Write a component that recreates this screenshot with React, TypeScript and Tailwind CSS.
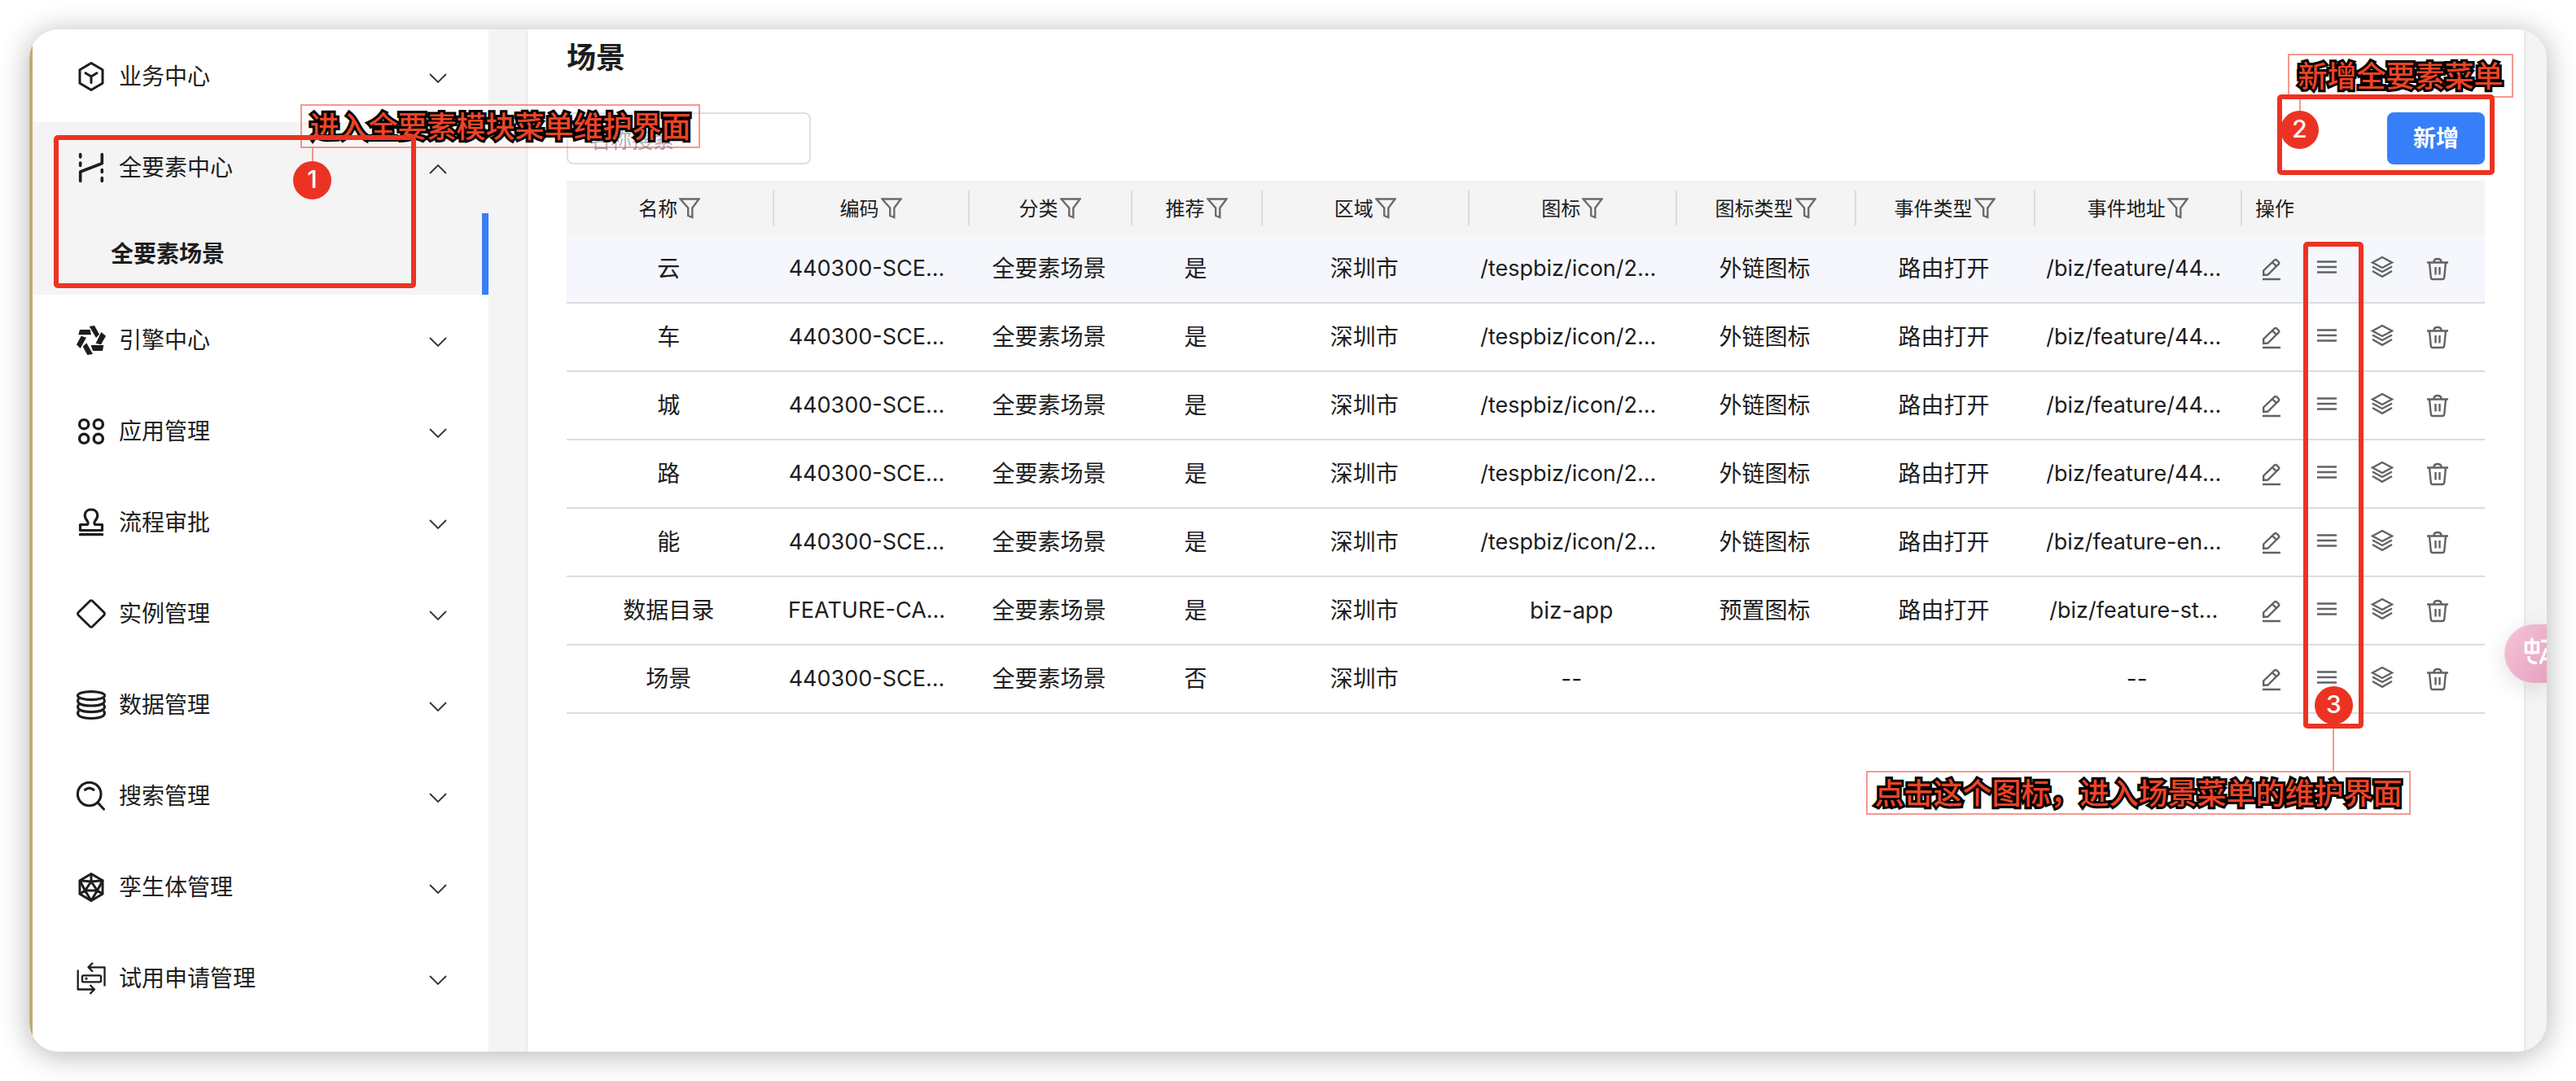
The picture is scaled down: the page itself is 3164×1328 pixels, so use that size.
import React from "react";

const MENU_ICONS: Record<string, React.ReactNode> = {
  business: (
    <g fill="none" stroke="currentColor" strokeWidth="3" strokeLinejoin="round" strokeLinecap="round">
      <path d="M18 1.5L32 9.7V26.3L18 34.5L4 26.3V9.7Z" />
      <path d="M11 13.8L18 18L25 13.8M18 18V25.5" />
    </g>
  ),
  feature: (
    <path
      d="M4.7 1.5V5M4.7 12V15.5M4.7 34.5V23L31.3 12.7V1.5M31.3 20.5V23.5M31.3 30.5V34.5"
      fill="none"
      stroke="currentColor"
      strokeWidth="3.6"
      strokeLinejoin="round"
      strokeLinecap="round"
    />
  ),
  engine: (
    <g fill="currentColor">
      <path d="M4 5H16.7L18 11.3H2.3Z" />
      <path d="M15.7 1L22 0L28 10.8L24 15Z" />
      <path d="M30.3 8L36 12.7L30 23.3L23.7 21.7Z" />
      <path d="M17.7 24H33.3L32 31H20Z" />
      <path d="M12.3 21.3L20 35L13.3 36L7.7 25.7Z" />
      <path d="M5.7 12.7L12 14.7L4.7 28L0 23.3Z" />
    </g>
  ),
  apps: (
    <g fill="none" stroke="currentColor" strokeWidth="3.4">
      <circle cx="9.2" cy="9.2" r="5.6" />
      <circle cx="26.8" cy="9.2" r="5.6" />
      <circle cx="9.2" cy="26.8" r="5.6" />
      <circle cx="26.8" cy="26.8" r="5.6" />
    </g>
  ),
  approval: (
    <g fill="none" stroke="currentColor" strokeWidth="3.2" strokeLinejoin="round" strokeLinecap="round">
      <path d="M4.5 27.5V20.5H13C14.6 20 14.4 17.5 13 15.6C7.8 9.5 10.5 2 18 2S28.2 9.5 23 15.6C21.6 17.5 21.4 20 23 20.5H31.5V27.5Z" />
      <path d="M4.3 32.7H31.7" />
    </g>
  ),
  instance: (
    <path
      d="M16.3 2.4Q18 0.8 19.7 2.4L33.7 16.3Q35.2 18 33.7 19.7L19.7 33.6Q18 35.2 16.3 33.6L2.3 19.7Q0.8 18 2.3 16.3Z"
      fill="none"
      stroke="currentColor"
      strokeWidth="2.8"
    />
  ),
  data: (
    <g fill="none" stroke="currentColor" strokeWidth="3.1">
      <ellipse cx="18" cy="6.6" rx="16.6" ry="5" />
      <path d="M2.8 9.8C-1 15 4 19 18 19S37 15 33.2 9.8" />
      <path d="M2.8 17.3C-1 22.5 4 26.6 18 26.6S37 22.5 33.2 17.3" />
      <path d="M2.8 25C-1 30.5 4 34.5 18 34.5S37 30.5 33.2 25" />
    </g>
  ),
  search: (
    <g fill="none" stroke="currentColor" strokeWidth="3.1" strokeLinecap="round">
      <circle cx="15.7" cy="15.5" r="14.3" />
      <path d="M10.5 10.3Q15.7 6 21 10.3M26.3 26.2L33.5 34" />
    </g>
  ),
  twin: (
    <g fill="none" stroke="currentColor" strokeWidth="3" strokeLinejoin="round">
      <path d="M18 1.5L32 9.7V26.3L18 34.5L4 26.3V9.7Z" />
      <path d="M18 1.5V11L10.5 22H25.5L18 11M4 9.7L18 11L32 9.7L25.5 22L32 26.3M25.5 22L18 34.5L10.5 22L4 26.3M10.5 22L4 9.7" />
    </g>
  ),
  trial: (
    <g fill="none" stroke="currentColor" strokeWidth="2.3" strokeLinejoin="round">
      <path d="M1.7 7.5V31.5H21M16.5 26L22 31.5L16.5 37" />
      <path d="M34.5 27.5V4.3H15M20 -1.2L14.5 4.3L20 9.8" />
      <rect x="7" y="14.3" width="23" height="8" rx="1.5" />
      <circle cx="12" cy="18.3" r="0.6" />
    </g>
  ),
};

type MenuEntry = { icon: string; label: string; child?: string };

const MENU: MenuEntry[] = [
  { icon: "business", label: "业务中心" },
  { icon: "feature", label: "全要素中心", child: "全要素场景" },
  { icon: "engine", label: "引擎中心" },
  { icon: "apps", label: "应用管理" },
  { icon: "approval", label: "流程审批" },
  { icon: "instance", label: "实例管理" },
  { icon: "data", label: "数据管理" },
  { icon: "search", label: "搜索管理" },
  { icon: "twin", label: "孪生体管理" },
  { icon: "trial", label: "试用申请管理" },
];

const COLUMNS = [
  { title: "名称", width: "w-auto" },
  { title: "编码", width: "w-[240px]" },
  { title: "分类", width: "w-[200px]" },
  { title: "推荐", width: "w-[160px]" },
  { title: "区域", width: "w-auto" },
  { title: "图标", width: "w-auto" },
  { title: "图标类型", width: "w-[220px]" },
  { title: "事件类型", width: "w-[220px]" },
  { title: "事件地址", width: "w-auto" },
];

const CODE = "440300-SCE...";
const ICON_PATH = "/tespbiz/icon/2...";

const ROWS = [
  ["云", CODE, "全要素场景", "是", "深圳市", ICON_PATH, "外链图标", "路由打开", "/biz/feature/44..."],
  ["车", CODE, "全要素场景", "是", "深圳市", ICON_PATH, "外链图标", "路由打开", "/biz/feature/44..."],
  ["城", CODE, "全要素场景", "是", "深圳市", ICON_PATH, "外链图标", "路由打开", "/biz/feature/44..."],
  ["路", CODE, "全要素场景", "是", "深圳市", ICON_PATH, "外链图标", "路由打开", "/biz/feature/44..."],
  ["能", CODE, "全要素场景", "是", "深圳市", ICON_PATH, "外链图标", "路由打开", "/biz/feature-en..."],
  ["数据目录", "FEATURE-CA...", "全要素场景", "是", "深圳市", "biz-app", "预置图标", "路由打开", "/biz/feature-st..."],
  ["场景", CODE, "全要素场景", "否", "深圳市", "--", "", "", "--"],
];

const ACTIONS = [
  {
    label: "编辑",
    art: (
      <>
        <path d="M4.2 22V16.5L17.8 3.5Q19 2.5 20.2 3.5L22.8 6Q23.8 7.2 22.8 8.4L9.5 21.5Z" />
        <path d="M15 6.3L20 11M3 27H25" />
      </>
    ),
  },
  { label: "菜单", art: <path d="M2 5.5H26M2 12H26M2 18.5H26" /> },
  {
    label: "图层",
    art: <path d="M14 0L26 6.5L14 13L2 6.5ZM2 11.5L14 18L26 11.5M2 17L14 23.8L26 17" />,
  },
  {
    label: "删除",
    art: (
      <path d="M1 6.5H27M9.5 6V5Q10 2 14 2T18.5 5V6M4 6.5L5.8 25Q6.2 27 8 27H20Q21.8 27 22.2 25L24 6.5M11.5 12V21.5M16.5 12V21.5" />
    ),
  },
];

function Chevron({ open }: { open?: boolean }) {
  return (
    <svg className="mt-1 h-3 w-[22px] shrink-0 text-[#333]" viewBox="0 0 22 12" fill="none" stroke="currentColor" strokeWidth="1.8">
      <path d={open ? "M1 11L11 1L21 11" : "M1 1L11 11L21 1"} />
    </svg>
  );
}

function Sidebar() {
  return (
    <nav className="w-[564px] shrink-0 border-l-4 border-[#c3aa70] bg-white pt-0.5">
      {MENU.map((item) => (
        <div key={item.label} className={item.child ? "bg-[#f4f4f4]" : ""}>
          <button type="button" aria-expanded={!!item.child} className="flex h-[112px] w-full items-center pr-[51px] pl-[54px]">
            <svg className="h-9 w-9 shrink-0 overflow-visible" viewBox="0 0 36 36">
              {MENU_ICONS[item.icon]}
            </svg>
            <span className="ml-4 flex-1 text-left text-[28px] leading-10">{item.label}</span>
            <Chevron open={!!item.child} />
          </button>
          {item.child && (
            <a href="#scene" className="flex h-[100px] items-center border-r-8 border-[#377ef9] pl-24 text-[28px] font-bold">
              {item.child}
            </a>
          )}
        </div>
      ))}
    </nav>
  );
}

function cellStyle(text: string) {
  if (text.endsWith("...")) return "pr-3 text-[27px]";
  return "pr-1 text-[28px]";
}

function SceneTable() {
  return (
    <table className="mt-5 w-full table-fixed border-separate border-spacing-0">
      <thead>
        <tr className="bg-[#f4f4f4]">
          {COLUMNS.map((c) => (
            <th key={c.title} className={`${c.width} h-[67px] p-0 font-normal`}>
              <div className="flex h-[43px] items-center justify-center gap-0.5 border-r-2 border-[#dcdcdc] text-[24px]">
                <span className="pt-[3px]">{c.title}</span>
                <svg className="h-[26px] w-[26px] text-[#6b6b6b]" viewBox="0 0 26 26" fill="none" stroke="currentColor" strokeWidth="2.4">
                  <path d="M1.5 1.5H24.5L16.3 12.5V24L11.2 22V12.5Z" />
                </svg>
              </div>
            </th>
          ))}
          <th className="w-[298px] p-0 pt-[3px] pl-4 text-left text-[24px] font-normal">操作</th>
        </tr>
      </thead>
      <tbody>
        {ROWS.map((row, r) => (
          <tr key={row[0]} className={r === 0 ? "bg-[#f5f7fc]" : ""}>
            {row.map((cell, i) => (
              <td
                key={i}
                className={`${cellStyle(cell)} h-[84px] border-b-2 border-[#dcdcdc] py-0 pl-0 text-center whitespace-nowrap`}
              >
                {cell}
              </td>
            ))}
            <td className="border-b-2 border-[#dcdcdc] p-0 pl-[22px]">
              <div className="flex gap-10">
                {ACTIONS.map((a) => (
                  <button key={a.label} type="button" aria-label={a.label} className="h-7 w-7 text-[#606266]">
                    <svg className="h-7 w-7 overflow-visible" viewBox="0 0 28 28" fill="none" stroke="currentColor" strokeWidth="2.4">
                      {a.art}
                    </svg>
                  </button>
                ))}
              </div>
            </td>
          </tr>
        ))}
      </tbody>
    </table>
  );
}

const NOTE =
  "absolute flex items-center justify-center border-2 border-[#ec3323]/50 bg-white/20 pt-0.5 text-[36px] leading-[48px] font-medium whitespace-nowrap text-[#ed4326] [-webkit-text-stroke:6px_#000] [paint-order:stroke_fill] [stroke-linejoin:round]";
const FRAME = "absolute rounded-[5px] border-[6px] border-[#ec3323]";
const DOT =
  "absolute flex h-[47px] w-[47px] items-center justify-center rounded-full bg-[#ec3323] pb-1 text-[30px] leading-none font-medium text-white";
const LEADER = "absolute w-0.5 bg-[#ec3323]/50";

function Annotations() {
  return (
    <div className="pointer-events-none absolute inset-0">
      <div className={`${NOTE} top-[92px] left-[333px] h-[54px] w-[491px]`}>进入全要素模块菜单维护界面</div>
      <div className={`${FRAME} top-[130px] left-[30px] h-[188px] w-[445px]`} />
      <div className={`${LEADER} top-[146px] left-[347px] h-[18px]`} />
      <div className={`${DOT} top-[162px] left-[324px]`}>1</div>

      <div className={`${NOTE} top-[30px] right-[41px] h-[54px] w-[277px]`}>新增全要素菜单</div>
      <div className={`${FRAME} top-[80px] right-[64px] h-[99px] w-[267px]`} />
      <div className={`${LEADER} top-[86px] right-[302px] h-4`} />
      <div className={`${DOT} top-[100px] right-[280px]`}>2</div>

      <div className={`${FRAME} top-[261px] right-[225px] h-[598px] w-[74px]`} />
      <div className={`${LEADER} top-[859px] right-[261px] h-[52px]`} />
      <div className={`${DOT} top-[807px] right-[238px]`}>3</div>
      <div className={`${NOTE} top-[911px] right-[167px] h-[54px] w-[669px]`}>点击这个图标，进入场景菜单的维护界面</div>
    </div>
  );
}

function TranslateBubble() {
  return (
    <button
      type="button"
      aria-label="翻译"
      className="absolute top-[731px] right-0 h-[72px] w-[52px] rounded-l-[36px] border-l-2 border-[#efc3d6] bg-linear-to-br from-[#f6c3d8] to-[#e5a3c1] shadow-[0_6px_28px_rgba(0,0,0,0.12)]"
    >
      <svg className="h-[72px] w-[50px]" viewBox="0 0 50 72" fill="none" stroke="#fff" strokeWidth="3.4">
        <path d="M24.5 22.5H39.5V34.5H24.5ZM32 16.5V37M43 20.5H50M28 39Q27 47.5 38 47.5M42 48.5L49 31H50M44 42.5H50" />
      </svg>
    </button>
  );
}

export default function App() {
  return (
    <div
      lang="zh-CN"
      className="flex min-h-screen bg-white p-9 text-[#1d1d1d] [font-family:Inter,'Noto_Sans_CJK_SC',sans-serif]"
    >
      <div className="relative flex min-w-0 flex-1 overflow-hidden rounded-[36px] bg-[#f4f4f4] shadow-[0_4px_36px_rgba(0,0,0,0.3)]">
        <Sidebar />
        <main className="mr-7 ml-12 min-w-0 flex-1 bg-white px-12 pt-2 shadow-[0_0_4px_rgba(0,0,0,0.12)]">
          <h1 className="text-[36px] leading-[54px] font-bold">场景</h1>
          <div className="mt-10 flex items-center justify-between">
            <input
              type="text"
              aria-label="名称搜索"
              placeholder="名称搜索"
              className="h-16 w-[300px] rounded-lg border-2 border-[#dcdfe6] bg-white px-[26px] pt-1 text-[26px] placeholder:text-[#a0a3ab]"
            />
            <button type="button" className="h-16 w-[120px] rounded-lg bg-[#377ef9] text-[28px] font-bold text-white">
              新增
            </button>
          </div>
          <SceneTable />
        </main>
        <TranslateBubble />
        <Annotations />
      </div>
    </div>
  );
}
